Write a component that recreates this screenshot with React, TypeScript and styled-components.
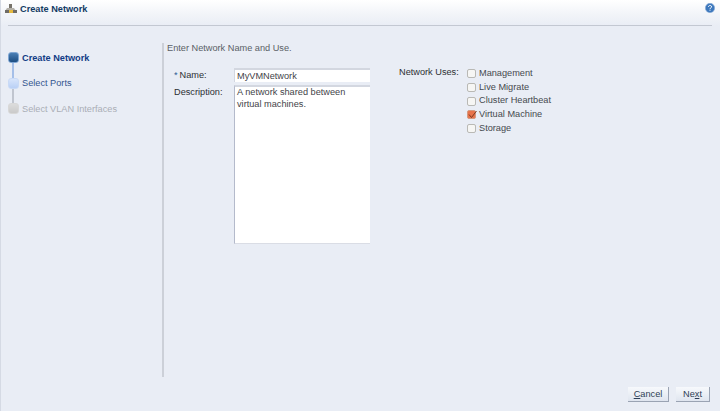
import React from "react";
import styled, { createGlobalStyle } from "styled-components";

const Global = createGlobalStyle`
  html, body { margin: 0; padding: 0; }
  body { font-family: "Liberation Sans", Arial, sans-serif; background: #e9edf5; }
  #root { width: 720px; height: 411px; overflow: hidden; }
`;

const Page = styled.div`
  width: 720px; height: 411px; display: flex; flex-direction: column;
  background: #e9edf5; box-sizing: border-box; border-left: 1px solid #d5dae4;
`;
const HeaderBand = styled.div`
  background: linear-gradient(#fff 0%, #f3f5f9 50%, #e9edf5 100%);
  flex: none; height: 26px;
`;
const Header = styled.header`
  height: 26px; margin-left: 7px; margin-right: 8px; display: flex; align-items: center; gap: 3px;
  border-bottom: 1px solid #c3c8d2; box-sizing: border-box; padding-bottom: 7px;
`;
const Title = styled.h1`
  margin: 0; font-size: 9.2px; font-weight: bold; color: #123a63; flex: 1; line-height: 12px;
`;
const Logo = styled.svg`
  margin-left: -3px; flex: none;
`;
const Help = styled.svg`
  margin-right: -3px; margin-top: -3px; flex: none;
`;
const Body = styled.div`
  flex: 1; display: flex; min-height: 0; padding-top: 17px;
`;
const Train = styled.nav`
  width: 161px; flex: none; padding: 2px 0 0 7px; box-sizing: border-box; display: flex; flex-direction: column;
`;
const Step = styled.div<{ $state: "active" | "next" | "off" }>`
  height: 25.5px; display: flex; align-items: center; gap: 3px; position: relative;
  font-size: 9.2px; font-weight: ${p => (p.$state === "active" ? "bold" : "normal")};
  color: ${p => (p.$state === "active" ? "#123c85" : p.$state === "next" ? "#34558f" : "#a9adb5")};
  &:not(:last-child)::after {
    content: ""; position: absolute; left: 4px; width: 2px; top: 18px; height: 15px;
    background: ${p => (p.$state === "active" ? "#a5bfe8" : "#c0c5cf")};
  }
`;
const Dot = styled.span<{ $state: "active" | "next" | "off" }>`
  width: 11px; height: 11px; border-radius: 3px; flex: none; box-sizing: border-box;
  background: ${p => p.$state === "active" ? "linear-gradient(#4a7fb5,#1c4d82)" : p.$state === "next" ? "linear-gradient(#d8e5fb,#b9d0f6)" : "linear-gradient(#dcdcdc,#cacaca)"};
  border: 1px solid ${p => p.$state === "active" ? "#7fa6d3" : p.$state === "next" ? "#c9daf6" : "#d8d8d8"};
`;
const Main = styled.main`
  width: 546px; height: 334px; flex: none; border-left: 2px solid #ccd0d8; box-sizing: border-box; padding-left: 3px;
`;
const Intro = styled.p`
  margin: 0; font-size: 9.2px; color: #5a5f66; line-height: 11px;
`;
const Form = styled.div`
  display: flex; margin-top: 14px;
`;
const LeftCol = styled.div`
  width: 204px; flex: none; display: grid; grid-template-columns: 60px 136px; row-gap: 3px; padding-left: 7px;
`;
const Label = styled.label`
  font-size: 9.2px; color: #2c2f33; line-height: 14px;
`;
const Req = styled.span`
  color: #2c5a93; margin-right: 2px;
`;
const Name = styled.input`
  width: 136px; height: 14px; box-sizing: border-box; border: 0; border-top: 2px solid #d3d7e0; border-left: 1px solid #d3d7e0;
  padding: 0 2px; font: 9.2px "Liberation Sans", Arial, sans-serif; color: #3f4348; background: #fff; outline: none;
`;
const Desc = styled.textarea`
  width: 136px; height: 159px; box-sizing: border-box; border: 0; border-top: 2px solid #d3d7e0; border-left: 1px solid #b4bacb;
  border-bottom: 1px solid #dadde5; padding: 0 2px; font: 9.2px/11.5px "Liberation Sans", Arial, sans-serif; color: #3f4348;
  background: #fff; resize: none; outline: none; display: block; overflow: hidden;
`;
const Uses = styled.div`
  display: flex; margin-left: 21px; margin-top: -1px;
`;
const UsesLabel = styled.div`
  width: 68px; font-size: 9.2px; color: #2c2f33; line-height: 11px;
`;
const CheckList = styled.div`
  display: flex; flex-direction: column; margin-top: -1px;
`;
const CheckRow = styled.label`
  height: 13.7px; display: flex; align-items: center; gap: 3px; font-size: 9.2px; color: #45494e;
`;
const Box = styled.span<{ $on?: boolean }>`
  width: 9px; height: 9px; margin-top: 2px; box-sizing: border-box; border-radius: 2px; flex: none; position: relative;
  border: 1px solid ${p => (p.$on ? "#d59a80" : "#b9b9b5")};
  background: ${p => (p.$on ? "#e8734a" : "#f6f6f4")};
  svg { position: absolute; left: -1px; top: -2px; }
`;
const Footer = styled.footer`
  display: flex; justify-content: flex-end; gap: 7px; padding-right: 10px; height: 24px; flex: none; margin-top: 2px;
`;
const Button = styled.button<{ $w: number }>`
  width: ${p => p.$w}px; height: 15px; padding: 0; border: 0; border-right: 1px solid #9aa3b3; border-bottom: 1px solid #9aa3b3;
  background: linear-gradient(#f7f9fc, #dfe5ef); font: 9.2px "Liberation Sans", Arial, sans-serif; color: #2e3e55;
`;

const NetIcon = () => (
  <Logo width="12" height="10" viewBox="0 0 12 10">
    <rect x="4" y="0" width="3" height="4" fill="#77736a" />
    <path d="M2 4H9L11 7H0Z" fill="#b3b0a8" />
    <rect x="0" y="6" width="12" height="3" fill="#6f6c66" />
    <rect x="4" y="6" width="4" height="3" fill="#e5b93f" />
  </Logo>
);
const HelpIcon = () => (
  <Help width="10" height="10" viewBox="0 0 10 10">
    <circle cx="5" cy="5" r="4.7" fill="#3d78bd" stroke="#8fb0d8" strokeWidth=".6" />
    <path d="M3.4 3.8C3.5 2.1 6.7 2.1 6.6 3.8C6.6 4.9 5 4.8 5 6" stroke="#fff" strokeWidth="1" fill="none" />
    <rect x="4.5" y="6.7" width="1" height="1" fill="#fff" />
  </Help>
);

const steps = [
  { t: "Create Network", s: "active" as const },
  { t: "Select Ports", s: "next" as const },
  { t: "Select VLAN Interfaces", s: "off" as const },
];
const uses = ["Management", "Live Migrate", "Cluster Heartbeat", "Virtual Machine", "Storage"];

export default function App() {
  return (
    <Page>
      <Global />
      <HeaderBand>
        <Header>
          <NetIcon />
          <Title>Create Network</Title>
          <HelpIcon />
        </Header>
      </HeaderBand>
      <Body>
        <Train>
          {steps.map(x => (
            <Step key={x.t} $state={x.s}><Dot $state={x.s} />{x.t}</Step>
          ))}
        </Train>
        <Main>
          <Intro>Enter Network Name and Use.</Intro>
          <Form>
            <LeftCol>
              <Label><Req>*</Req>Name:</Label>
              <Name defaultValue="MyVMNetwork" />
              <Label>Description:</Label>
              <Desc defaultValue={"A network shared between virtual machines."} />
            </LeftCol>
            <Uses>
              <UsesLabel>Network Uses:</UsesLabel>
              <CheckList>
                {uses.map(u => (
                  <CheckRow key={u}>
                    <Box $on={u === "Virtual Machine"}>
                      {u === "Virtual Machine" && (
                        <svg width="11" height="11" viewBox="0 0 11 11"><path d="M2 5.5L4.5 8.5L9.5 2" stroke="#7a3a22" strokeWidth="1" fill="none" /></svg>
                      )}
                    </Box>
                    {u}
                  </CheckRow>
                ))}
              </CheckList>
            </Uses>
          </Form>
        </Main>
      </Body>
      <Footer>
        <Button $w={41}><u>C</u>ancel</Button>
        <Button $w={34}>Ne<u>x</u>t</Button>
      </Footer>
    </Page>
  );
}
